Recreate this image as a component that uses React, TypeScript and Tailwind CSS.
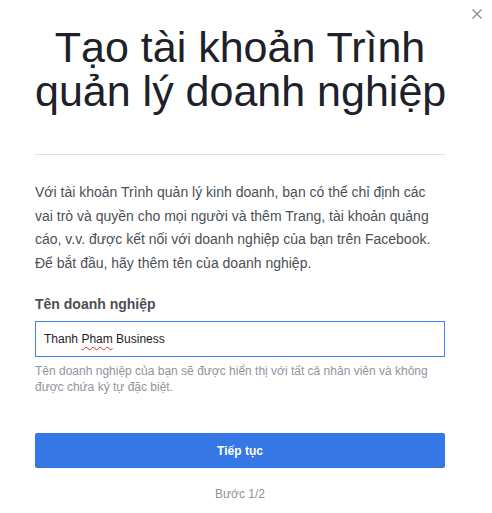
import React from "react";

export default function App() {
  return (
    <div
      className="relative w-full h-[513px] bg-white overflow-hidden"
      style={{ fontFamily: '"Liberation Sans", Arial, Helvetica, sans-serif' }}
    >
      <button className="absolute left-[472px] top-[9px] w-[10px] h-[10px] flex items-center justify-center" aria-label="Close">
        <svg width="10" height="10" viewBox="0 0 10 10">
          <path d="M1 1 L9 9 M9 1 L1 9" stroke="#90949c" strokeWidth="1.5" strokeLinecap="square" />
        </svg>
      </button>
      <div className="ml-[35px] w-[410px] pt-[25px] flex flex-col">
        <h1 className="text-[43px] leading-[44px] text-center text-[#1d2129] font-normal whitespace-nowrap">
          Tạo tài khoản Trình
          <br />
          quản lý doanh nghiệp
        </h1>
        <div className="mt-[41px] h-px bg-[#dddfe2]" />
        <p className="mt-[26px] text-[14px] leading-[23.5px] text-[#4b4f56] whitespace-nowrap">
          Với tài khoản Trình quản lý kinh doanh, bạn có thể chỉ định các
          <br />
          vai trò và quyền cho mọi người và thêm Trang, tài khoản quảng
          <br />
          cáo, v.v. được kết nối với doanh nghiệp của bạn trên Facebook.
          <br />
          Để bắt đầu, hãy thêm tên của doanh nghiệp.
        </p>
        <label className="mt-[20px] text-[14px] leading-[18px] font-bold text-[#4b4f56]">
          Tên doanh nghiệp
        </label>
        <div className="mt-[8px] h-[36px] border border-[#4080ff] px-[8px] flex items-center text-[12px] text-[#1d2129]">
          <span>
            Thanh{" "}
            <span className="underline decoration-wavy decoration-[#e0301e] decoration-1 underline-offset-[3px]">
              Pham
            </span>{" "}
            Business
          </span>
        </div>
        <p className="mt-[6px] text-[12px] leading-4 text-[#90949c] whitespace-nowrap">
          Tên doanh nghiệp của bạn sẽ được hiển thị với tất cả nhân viên và không
          <br />
          được chứa ký tự đặc biệt.
        </p>
        <button className="mt-[38px] h-[35px] rounded-[2px] bg-[#3578e5] text-white font-bold text-[12px] flex items-center justify-center">
          Tiếp tục
        </button>
        <div className="mt-[18px] text-center text-[12px] leading-4 text-[#90949c]">
          Bước 1/2
        </div>
      </div>
    </div>
  );
}
